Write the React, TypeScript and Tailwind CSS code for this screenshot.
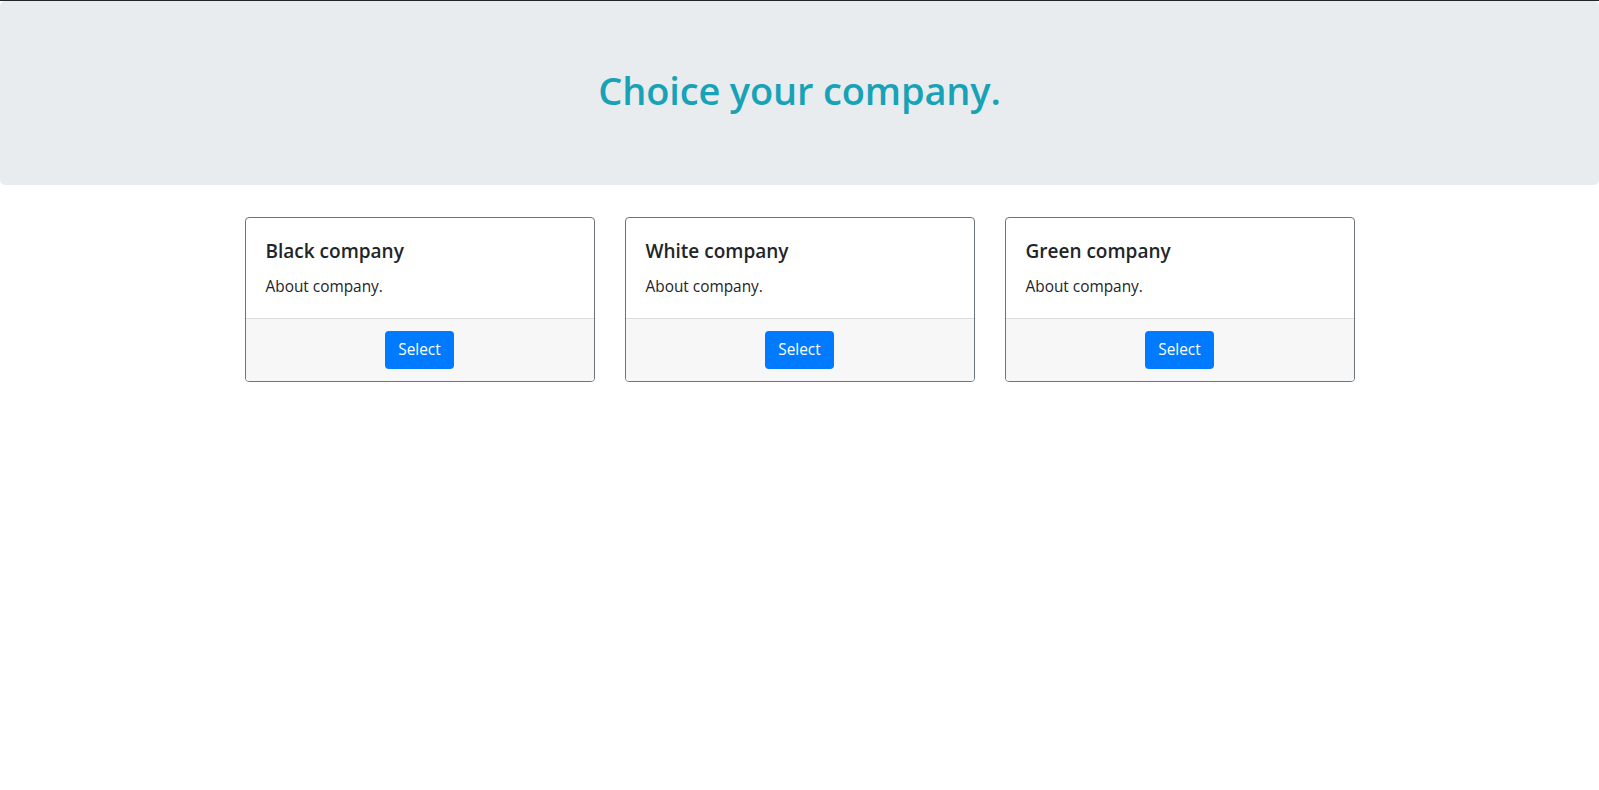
const companies = ["Black company", "White company", "Green company"];

export default function App() {
  return (
    <div
      className="min-h-screen bg-white text-[#212529] border-t border-[#212529]"
      style={{ fontFamily: '"Open Sans", "Noto Sans", sans-serif' }}
    >
      {/* Jumbotron */}
      <div className="bg-[#e9ecef] rounded-[5px] px-8 pt-[65px] pb-[63px] mb-8 text-center">
        <h1 className="text-[38px] leading-[48px] font-semibold text-[#17a2b8] mb-2 tracking-[-0.15px]">
          Choice your company.
        </h1>
      </div>

      {/* Card deck */}
      <div className="w-[1140px] mx-auto px-[15px]">
        <div className="grid grid-cols-3 gap-[30px]">
          {companies.map((c) => (
            <div key={c} className="border border-[#6c757d] rounded-[4px] overflow-hidden flex flex-col">
              <div className="px-5 pt-[21px] pb-[19px]">
                <h5 className="text-[19px] leading-6 font-semibold mb-3">{c}</h5>
                <p className="text-[15.4px] leading-6">About company.</p>
              </div>
              <div className="bg-[#f7f7f7] border-t border-[#dcdcdc] px-5 py-3 flex justify-center">
                <button className="bg-[#007bff] text-white text-[15.4px] leading-6 px-[13px] py-[7px] rounded-[4px]">
                  Select
                </button>
              </div>
            </div>
          ))}
        </div>
      </div>
    </div>
  );
}
